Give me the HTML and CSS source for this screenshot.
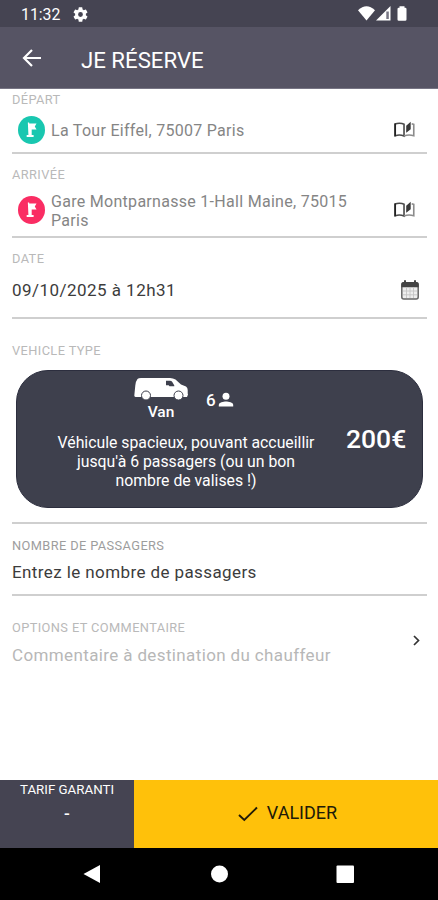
FILE: index.html
```html
<!DOCTYPE html>
<html lang="fr">
<head>
<meta charset="utf-8">
<meta name="viewport" content="width=device-width, initial-scale=1">
<title>Je réserve</title>
<link rel="stylesheet" href="styles.css">
</head>
<body>
<svg width="0" height="0" class="defs" aria-hidden="true">
  <symbol id="flag" viewBox="0 0 28 28">
    <path d="M10.2 6.3h1.400v1h7.600l-1.800 3 1.800 3.200h-5v5.800h2v2H9v-2h1.800z" fill="#fff"/>
  </symbol>
  <symbol id="book" viewBox="0 0 22 18">
    <path d="M1.300 2.700C3.500 1.600 8 1.600 10.500 2.900V15.300C8 14.200 3.500 14.200 1.300 15z" fill="none" stroke="#4a4a4a" stroke-width="1.700"/>
    <path d="M1.200 2.200v13.300" stroke="#222" stroke-width="1.800"/>
    <path d="M10.500 15.300C13 14.300 18 14.200 20.700 15V3.200L18.500 2.500" fill="none" stroke="#8c8c8c" stroke-width="1.700"/>
    <path d="M17.500 .3l-4.700 4.200v7.300l4.700-3.700z" fill="#383838"/>
  </symbol>
</svg>
<div class="screen">
  <div class="status">
    <span class="clock">11:32</span>
    <svg class="gear" viewBox="2 2 20 20"><path fill="#fff" fill-rule="evenodd" d="M19.140 12.940c.04-.3.06-.61.06-.94s-.02-.64-.07-.94l2.030-1.580a.49.49 0 0 0 .12-.61l-1.920-3.320a.49.49 0 0 0-.59-.22l-2.390.96a7 7 0 0 0-1.620-.94l-.36-2.540A.48.48 0 0 0 13.920 2.400h-3.840a.48.48 0 0 0-.47.410l-.36 2.540c-.59.240-1.130.570-1.620.940l-2.390-.96a.49.49 0 0 0-.59.220L2.740 8.870a.49.49 0 0 0 .12.610l2.030 1.580a6 6 0 0 0 0 1.880l-2.030 1.580a.49.49 0 0 0-.12.610l1.920 3.320c.12.220.37.290.59.220l2.390-.96c.5.380 1.030.7 1.620.940l.36 2.540c.05.240.24.410.48.410h3.840c.24 0 .44-.17.470-.41l.36-2.540a7 7 0 0 0 1.620-.94l2.390.96c.22.080.47 0 .59-.22l1.920-3.320a.49.49 0 0 0-.12-.61zM12 15.200a3.200 3.200 0 1 1 0-6.400 3.200 3.200 0 0 1 0 6.400z"/></svg>
    <svg class="signals" viewBox="0 0 52 18"><g fill="#fff"><path d="M0 5.200Q8.500-2.800 17 5.200L8.500 15.500z"/><path d="M18 15.500 32.500 1v14.500z"/><path d="M41.500 1.200h5v1.500h.7q1.300 0 1.300 1.300v10.400q0 1.300-1.300 1.300h-6.400q-1.300 0-1.300-1.300V4q0-1.300 1.300-1.300h.7z"/></g><path d="M28.300 6.500h2.500v7.500h-2.500z" fill="#777684"/></svg>
  </div>
  <header class="appbar">
    <svg class="back" viewBox="0 0 20 18"><path d="M19 9H2M10 1 2 9l8 8" fill="none" stroke="#fff" stroke-width="2.200"/></svg>
    <h1>JE RÉSERVE</h1>
  </header>
  <main>
    <section class="row depart">
      <div class="label">DÉPART</div>
      <div class="place">
        <svg class="pin green"><use href="#flag"/></svg>
        <div class="address">La Tour Eiffel, 75007 Paris</div>
        <svg class="book"><use href="#book"/></svg>
      </div>
    </section>
    <section class="row arrivee">
      <div class="label">ARRIVÉE</div>
      <div class="place">
        <svg class="pin red"><use href="#flag"/></svg>
        <div class="address">Gare Montparnasse 1-Hall Maine, 75015<br>Paris</div>
        <svg class="book"><use href="#book"/></svg>
      </div>
    </section>
    <section class="row date">
      <div class="label">DATE</div>
      <div class="field">
        <span class="value">09/10/2025 à 12h31</span>
        <svg class="calendar" viewBox="0 0 18 20"><rect x=".8" y="3" width="16.400" height="16" rx="2" fill="#eee" stroke="#666" stroke-width="1.500"/><path d="M.3 7.200V4Q.3 2 2.300 2H3V.3h2V2h8V.3h2V2h.7q2 0 2 2v3.200z" fill="#444"/><path d="M2 11h14M2 14.800h14M5.500 8v10M9 8v10M12.500 8v10" stroke="#c4c4c4" stroke-width=".9"/></svg>
      </div>
    </section>
    <section class="row vehicle">
      <div class="label">VEHICLE TYPE</div>
      <div class="card">
        <div class="info">
          <div class="type">
            <div class="van">
              <svg viewBox="0 0 54 23"><path fill="#fff" d="M3.500 2Q4.500 1 7 1h29q3 0 5.500 1.500l5.500 5 5 2q1.700 1 1.700 3.500v3.500l.3 1-1 2.500H1.500q-1.200-.2-1.200-1.500l1-10Q1.800 4 3.500 2z"/><g fill="#fff" stroke="#3e404d" stroke-width="1"><circle cx="12" cy="18.500" r="4.500"/><circle cx="44.500" cy="18.500" r="4.500"/></g><path d="M32 3.700h4q1.500 0 2.300 1.200l2 3.700v.6h-4.800l-.8-1H32z" fill="#3e404d"/></svg>
              <span>Van</span>
            </div>
            <div class="seats"><span>6</span><svg viewBox="0 0 16 16"><circle cx="8" cy="4.300" r="3.500" fill="#fff"/><path d="M.8 14.500v-1.600C.8 10.500 5.500 9.500 8 9.500s7.200 1 7.200 3.400v1.600z" fill="#fff"/></svg></div>
          </div>
          <p>Véhicule spacieux, pouvant accueillir<br>jusqu'à 6 passagers (ou un bon<br>nombre de valises !)</p>
        </div>
        <div class="price">200€</div>
      </div>
    </section>
    <section class="row passengers">
      <div class="label">NOMBRE DE PASSAGERS</div>
      <div class="value">Entrez le nombre de passagers</div>
    </section>
    <section class="options">
      <div>
        <div class="label">OPTIONS ET COMMENTAIRE</div>
        <div class="value hint">Commentaire à destination du chauffeur</div>
      </div>
      <svg class="chevron" viewBox="0 0 7 11"><path d="M1 1l4.500 4.500L1 10" fill="none" stroke="#333" stroke-width="1.700"/></svg>
    </section>
  </main>
  <footer class="actions">
    <div class="fare"><span>TARIF GARANTI</span><b>-</b></div>
    <div class="validate"><svg viewBox="0 0 20 16"><path d="M1 9l5.300 5L19 1.500" fill="none" stroke="#201a08" stroke-width="1.900"/></svg><span>VALIDER</span></div>
  </footer>
  <nav class="navbar">
    <svg viewBox="0 0 438 52"><g fill="#fff"><path d="M83.500 26 100 17v18z"/><circle cx="219.500" cy="26" r="8.500"/><rect x="336.500" y="17.500" width="17.500" height="17.500" rx="1"/></g></svg>
  </nav>
</div>
</body>
</html>
```

FILE: styles.css
```css
* { box-sizing: border-box; }
body { margin: 0; font-family: Roboto, "Liberation Sans", sans-serif; background: #fff; }
h1, p { margin: 0; font-weight: 400; }
svg { display: block; flex: none; }
.defs { position: absolute; }
.screen { width: 438px; height: 900px; display: flex; flex-direction: column; overflow: hidden; white-space: nowrap; }

.status { height: 27px; background: #454452; color: #fff; display: flex; align-items: center; padding: 1px 28px 0 21px; }
.clock { font-size: 15.800px; width: 52px; }
.gear { width: 15px; height: 15px; }
.signals { width: 52px; height: 18px; margin-left: auto; }

.appbar { height: 62px; background: #565464; border-bottom: 1px solid #777584; color: #fff; display: flex; align-items: center; padding-left: 22px; }
.back { width: 20px; height: 18px; margin-top: 1px; }
.appbar h1 { margin-left: 39px; font-size: 22.200px; line-height: 28px; padding-top: 4px; }

main { flex: 1; padding: 0 11px 0 12px; }
.row { border-bottom: 2px solid #cfcfcf; }
.label { font-size: 12.800px; line-height: 16px; letter-spacing: .4px; color: #b9b9b9; }
.value { font-size: 17px; line-height: 22px; color: #3c3c3c; letter-spacing: .4px; }

.depart { height: 65px; padding-top: 3px; }
.depart .place { height: 28px; margin-top: 8px; }
.arrivee { height: 84px; padding-top: 13px; }
.arrivee .place { height: 40px; margin-top: 7px; }
.place { display: flex; align-items: center; padding: 0 12px 0 6px; }
.pin { width: 27px; height: 28px; border-radius: 50%; margin-right: 6px; }
.green { background: #19c7b0; }
.red { background: #fa2d63; }
.address { flex: 1; font-size: 16px; line-height: 19px; letter-spacing: .29px; color: #858585; }
.arrivee .address { padding-top: 1px; }
.book { width: 21px; height: 18px; }

.date { height: 81px; padding-top: 13px; }
.field { display: flex; justify-content: space-between; align-items: center; height: 22px; margin-top: 12px; padding-right: 8px; }
.field .value { letter-spacing: .46px; }
.calendar { width: 18px; height: 20px; }

.vehicle { height: 205px; padding-top: 24px; }
.card { height: 138px; margin: 11px 4px 0; border-radius: 32px; background: #3e404d; color: #fff; display: flex; align-items: center; border: 1px solid #2c2e3e; }
.info { width: 338px; text-align: center; height: 100%; padding-top: 6px; }
.type { display: flex; padding-left: 117px; gap: 18px; }
.van { width: 54px; display: flex; flex-direction: column; align-items: center; font-size: 15.500px; line-height: 18px; font-weight: 500; }
.van svg { width: 54px; height: 23px; margin-bottom: 3px; }
.seats { display: flex; align-items: center; gap: 2px; height: 18px; margin-top: 14px; font-size: 17px; font-weight: 500; }
.seats svg { width: 16px; height: 16px; }
.info p { font-size: 15.800px; line-height: 19px; margin-top: 12px; }
.price { font-size: 26.500px; font-weight: 500; margin: -2px 0 0 -9px; }

.passengers { height: 72px; padding-top: 14px; }
.passengers .label { color: #9d9d9d; }
.passengers .value { margin-top: 7px; }
.options { display: flex; align-items: center; justify-content: space-between; padding: 24px 7px 0 0; }
.options .value { margin-top: 8px; }
.options .hint { color: #b7b7b7; letter-spacing: .37px; }
.chevron { width: 7px; height: 11px; margin-top: -5px; }

.actions { height: 68px; display: flex; }
.fare { width: 134px; background: #454452; color: #fff; display: flex; flex-direction: column; align-items: center; font-size: 13.300px; line-height: 19px; }
.fare b { font-size: 17px; line-height: 28px; font-weight: 500; }
.validate { flex: 1; background: #ffc10a; color: #201a08; display: flex; align-items: center; justify-content: center; gap: 9px; font-size: 18px; padding: 0 0 3px 3px; }
.validate svg { width: 20px; height: 16px; margin-top: 2px; }
.navbar { height: 52px; background: #000; }
.navbar svg { width: 438px; height: 52px; }
```
